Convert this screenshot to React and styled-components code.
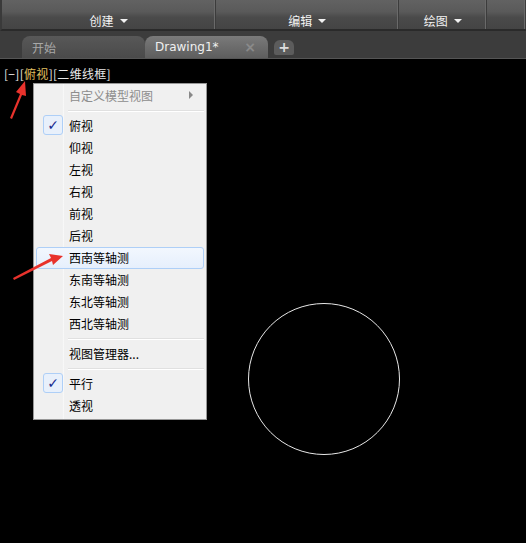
import React from 'react';
import styled, { createGlobalStyle } from 'styled-components';

const GlobalStyle = createGlobalStyle`
  html, body { margin: 0; padding: 0; background: #000; }
  body { font-family: "Microsoft YaHei", "Noto Sans CJK SC", "DejaVu Sans", sans-serif; }
`;

const panels = [
  { label: '创建', width: 215 },
  { label: '编辑', width: 184 },
  { label: '绘图', width: 88 },
  { label: '', width: 39 },
];

const items = [
  { label: '俯视', checked: true },
  { label: '仰视' },
  { label: '左视' },
  { label: '右视' },
  { label: '前视' },
  { label: '后视' },
  { label: '西南等轴测', hover: true },
  { label: '东南等轴测' },
  { label: '东北等轴测' },
  { label: '西北等轴测' },
];

export default function App() {
  return (
    <Page>
      <GlobalStyle />
      <Ribbon>
        {panels.map((p, i) => (
          <Panel key={i} style={{ width: p.width }}>
            {p.label && (
              <PanelLabel>
                {p.label}
                <Caret />
              </PanelLabel>
            )}
          </Panel>
        ))}
      </Ribbon>
      <TabBar>
        <Tab>开始</Tab>
        <Tab $active>
          Drawing1*
          <Close>×</Close>
        </Tab>
        <AddTab>+</AddTab>
      </TabBar>
      <Canvas>
        <ViewLabel>
          [−][<Hot>俯视</Hot>][二维线框]
        </ViewLabel>
        <Circle />
        <Menu>
          <MenuItem $disabled>
            <CheckCell />
            <ItemText>自定义模型视图</ItemText>
            <SubArrow />
          </MenuItem>
          <Sep />
          {items.map(it => (
            <MenuItem key={it.label} $hover={it.hover}>
              <CheckCell>{it.checked && <CheckBox>✓</CheckBox>}</CheckCell>
              <ItemText>{it.label}</ItemText>
            </MenuItem>
          ))}
          <Sep />
          <MenuItem>
            <CheckCell />
            <ItemText>视图管理器...</ItemText>
          </MenuItem>
          <Sep />
          <MenuItem>
            <CheckCell>
              <CheckBox>✓</CheckBox>
            </CheckCell>
            <ItemText>平行</ItemText>
          </MenuItem>
          <MenuItem>
            <CheckCell />
            <ItemText>透视</ItemText>
          </MenuItem>
        </Menu>
        <Arrows width="526" height="485" viewBox="0 58 526 485">
          <polygon points="10,117 20,93 16,91 25,80 26,95 22,94 12,118" fill="#e8322c" />
          <polygon points="13,277 51,257 49,253 63,255 53,264 52,260 14,279" fill="#e8322c" />
        </Arrows>
      </Canvas>
    </Page>
  );
}

const Page = styled.div`
  width: 526px;
  height: 543px;
  background: #000;
  overflow: hidden;
  position: relative;
`;

const Ribbon = styled.div`
  display: flex;
  height: 31px;
  background: linear-gradient(#626262 0%, #5a5a5a 40%, #4a4a4a 60%, #444 100%);
  border-left: 2px solid #3a3a3a;
  border-bottom: 2px solid #2a2a2a;
  box-sizing: border-box;
`;

const Panel = styled.div`
  display: flex;
  align-items: flex-end;
  justify-content: center;
  border-right: 1px solid #3c3c3c;
  box-shadow: inset -1px 0 0 #6a6a6a;
  padding-bottom: 0;
  box-sizing: border-box;
`;

const PanelLabel = styled.span`
  display: flex;
  align-items: center;
  gap: 6px;
  color: #f2f2f2;
  font-size: 12px;
`;

const Caret = styled.span`
  width: 0;
  height: 0;
  border-left: 4px solid transparent;
  border-right: 4px solid transparent;
  border-top: 4px solid #f2f2f2;
`;

const TabBar = styled.div`
  display: flex;
  align-items: flex-end;
  height: 27px;
  background: #3c3c3c;
  padding-left: 22px;
  border-bottom: 1px solid #555;
`;

const Tab = styled.div`
  display: flex;
  align-items: center;
  justify-content: space-between;
  width: 123px;
  height: 22px;
  box-sizing: border-box;
  padding: 0 12px 0 10px;
  border-radius: 8px 8px 0 0;
  background: ${p => (p.$active ? 'linear-gradient(#7a7a7a, #5e5e5e)' : 'linear-gradient(#585858, #4a4a4a)')};
  color: ${p => (p.$active ? '#f0f0f0' : '#a8a8a8')};
  font-size: 12px;
  font-family: "DejaVu Sans", "Noto Sans CJK SC", sans-serif;
`;

const Close = styled.span`
  color: #8a8a8a;
  font-size: 14px;
  font-weight: bold;
`;

const AddTab = styled.div`
  width: 20px;
  height: 15px;
  margin: 0 0 3px 6px;
  border-radius: 6px 6px 2px 2px;
  background: #5c5c5c;
  color: #ddd;
  font-size: 14px;
  font-weight: bold;
  line-height: 15px;
  text-align: center;
  font-family: "DejaVu Sans", sans-serif;
`;

const Canvas = styled.div`
  position: relative;
  height: 485px;
  background: #000;
`;

const ViewLabel = styled.div`
  padding: 8px 0 0 4px;
  color: #e8e8e8;
  font-size: 12px;
  line-height: 14px;
  letter-spacing: 0.3px;
`;

const Hot = styled.span`
  color: #e0c060;
`;

const Circle = styled.div`
  position: absolute;
  left: 248px;
  top: 244px;
  width: 150px;
  height: 150px;
  border: 1.5px solid #e8e8e8;
  border-radius: 50%;
`;

const Menu = styled.div`
  position: absolute;
  left: 33px;
  top: 24px;
  width: 174px;
  box-sizing: border-box;
  padding: 1px 2px 2px 2px;
  background: linear-gradient(90deg, #f0f0f0 0, #f0f0f0 28px, #e2e3e3 28px, #fff 29px, #f0f0f0 30px);
  border: 1px solid #979797;
  box-shadow: 2px 2px 3px rgba(0,0,0,0.4);
`;

const MenuItem = styled.div`
  display: flex;
  align-items: center;
  height: 22px;
  box-sizing: border-box;
  border: 1px solid ${p => (p.$hover ? '#aecff7' : 'transparent')};
  border-radius: 3px;
  background: ${p => (p.$hover ? 'linear-gradient(#f2f7fe, #e6effc)' : 'transparent')};
  color: ${p => (p.$disabled ? '#8d8d8d' : '#000')};
  font-size: 12px;
  padding-bottom: 2px;
`;

const CheckCell = styled.div`
  width: 32px;
  display: flex;
  justify-content: center;
  align-items: center;
`;

const CheckBox = styled.div`
  width: 20px;
  height: 20px;
  box-sizing: border-box;
  border: 1px solid #aecff7;
  border-radius: 3px;
  background: #e8f0fb;
  color: #1a2b8f;
  font-size: 14px;
  font-weight: bold;
  line-height: 18px;
  text-align: center;
  font-family: "DejaVu Sans", sans-serif;
`;

const ItemText = styled.span`
  flex: 1;
`;

const SubArrow = styled.span`
  width: 0;
  height: 0;
  margin-right: 10px;
  border-top: 4px solid transparent;
  border-bottom: 4px solid transparent;
  border-left: 4px solid #888;
`;

const Sep = styled.div`
  height: 1px;
  margin: 3px 0 3px 32px;
  background: #e0e0e0;
  border-bottom: 1px solid #fff;
`;

const Arrows = styled.svg`
  position: absolute;
  left: 0;
  top: 0;
  pointer-events: none;
`;
